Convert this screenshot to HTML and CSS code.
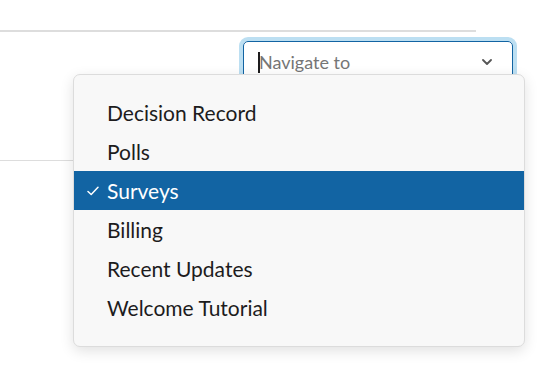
FILE: index.html
```html
<!DOCTYPE html>
<html lang="en">
<head>
    <meta charset="UTF-8">
    <meta name="viewport" content="width=device-width, initial-scale=1.0">
    <title>Navigate to</title>
    <link rel="stylesheet" href="styles.css">
</head>
<body>
    <div class="page">
        <div class="header-rule"></div>
        <div class="toolbar">
            <div class="select">
                <span class="caret"></span>
                <span class="placeholder">Navigate to</span>
                <svg class="chevron" width="10" height="6" viewBox="0 0 10 6">
                    <polyline points="1,1 5,5 9,1" fill="none" stroke="#555" stroke-width="1.8" stroke-linecap="round" stroke-linejoin="round"/>
                </svg>
            </div>
        </div>
        <div class="section-rule"></div>

        <ul class="menu">
            <li class="menu-item">Decision Record</li>
            <li class="menu-item">Polls</li>
            <li class="menu-item selected">
                <svg class="check" width="12" height="10" viewBox="0 0 12 10">
                    <polyline points="1,5.5 4.2,8.5 11,1.2" fill="none" stroke="#fff" stroke-width="1.5" stroke-linecap="round" stroke-linejoin="round"/>
                </svg>
                Surveys
            </li>
            <li class="menu-item">Billing</li>
            <li class="menu-item">Recent Updates</li>
            <li class="menu-item">Welcome Tutorial</li>
        </ul>
    </div>
</body>
</html>
```

FILE: styles.css
```css
body {
    margin: 0;
    font-family: 'Lato', 'Noto Sans', sans-serif;
    background: #fff;
    color: #1d1c1d;
}

.page {
    position: relative;
    width: 560px;
    height: 374px;
    overflow: hidden;
}

.header-rule {
    margin-top: 30px;
    width: 476px;
    height: 2px;
    background: #dddddd;
}

.toolbar {
    display: flex;
    padding-left: 243px;
    margin-top: 9px;
}

.select {
    box-sizing: border-box;
    width: 270px;
    height: 42px;
    border: 1px solid #1264a3;
    border-radius: 5px;
    box-shadow: 0 0 0 4px #bcdff2;
    display: flex;
    align-items: center;
    padding: 0 20px 0 14px;
    font-size: 18px;
}

.caret {
    width: 2px;
    height: 21px;
    background: #1d1c1d;
    margin-right: -1px;
}

.placeholder {
    color: #767676;
    flex: 1;
}

.chevron {
    display: block;
}

.section-rule {
    margin-top: 77px;
    width: 476px;
    height: 1px;
    background: #dddddd;
}

.menu {
    position: absolute;
    left: 73px;
    top: 74px;
    box-sizing: border-box;
    width: 452px;
    margin: 0;
    padding: 18px 0 19px;
    list-style: none;
    background: #f8f8f8;
    border: 1px solid #dcdcdc;
    border-radius: 7px;
    box-shadow: 0 4px 14px rgba(0, 0, 0, 0.12);
}

.menu-item {
    position: relative;
    height: 39px;
    line-height: 39px;
    padding-left: 33px;
    font-size: 21px;
    color: #1d1c1d;
}

.menu-item.selected {
    background: #1264a3;
    color: #fff;
}

.check {
    position: absolute;
    left: 13px;
    top: 15px;
}
```
